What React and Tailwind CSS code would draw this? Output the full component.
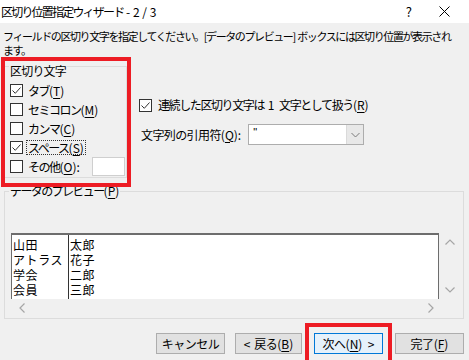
import React from 'react';

const Check = ({ checked }) => (
  <span className="w-[13px] h-[13px] border border-[#333333] bg-white flex items-center justify-center shrink-0">
    {checked && (
      <svg width="11" height="11" viewBox="0 0 11 11">
        <path d="M1.5 5.5 L4.3 8.3 L9.5 2.5" stroke="#333333" fill="none" strokeWidth="1" />
      </svg>
    )}
  </span>
);

// access key like (T)
const Key = ({ k, tail = '' }) => (
  <span className="tracking-[0px]">
    (<span className="underline underline-offset-2">{k}</span>){tail}
  </span>
);

const Option = ({ checked, children }) => (
  <div className="h-[19px] flex items-center gap-[5px]">
    <Check checked={checked} />
    <span className="whitespace-nowrap">{children}</span>
  </div>
);

const Button = ({ children, primary, className = '' }) => (
  <button
    className={`h-[21px] flex items-center justify-center text-[12px] tracking-[-0.5px] border ${
      primary ? 'border-[#0078d7] bg-[#e5f1fb]' : 'border-[#adadad] bg-[#e1e1e1]'
    } ${className}`}
  >
    <span className="whitespace-pre">{children}</span>
  </button>
);

const App = () => {
  return (
    <div className="w-[469px] h-[360px] bg-[#f0f0f0] overflow-hidden flex flex-col text-black font-['Noto_Sans_CJK_JP','Noto_Sans',sans-serif]">
      {/* title bar */}
      <div className="h-[23px] bg-white flex items-center shrink-0">
        <span className="pl-[1px] text-[12px] tracking-[-1.8px] leading-none whitespace-pre">
          区切り位置指定ウィザード<span className="tracking-[0px]"> - 2 / 3</span>
        </span>
        <span className="ml-auto mr-[27px] text-[13px] leading-none">?</span>
        <svg className="mr-[19px]" width="11" height="11" viewBox="0 0 11 11">
          <path d="M0.5 0.5 L10.5 10.5 M10.5 0.5 L0.5 10.5" stroke="#000" strokeWidth="1" />
        </svg>
      </div>

      {/* description */}
      <div className="pt-[6px] pl-[3px] text-[11px] leading-[14px] tracking-[-1.4px] whitespace-pre">
        フィールドの区切り文字を指定してください。[データのプレビュー]<span className="tracking-[0px]"> </span>ボックスには区切り位置が表示され
        <br />
        ます。
      </div>

      {/* options */}
      <div className="flex h-[130px] shrink-0">
        <div className="relative z-10 ml-[1px] w-[130px] h-[130px] border-[4px] border-[#ed1c24]">
          <div className="mt-[5px] h-[112px] border-t border-r border-b border-[#dcdcdc] pl-[5px] text-[12px] tracking-[-1.5px]">
            <div className="-mt-[3px] ml-[-1px] px-[1px] w-fit h-[14px] leading-[14px] bg-[#f0f0f0] tracking-[-0.8px]">区切り文字</div>
            <div className="mt-[3px] flex flex-col">
              <Option checked>
                タブ<Key k="T" />
              </Option>
              <Option>
                セミコロン<Key k="M" />
              </Option>
              <Option>
                カンマ<Key k="C" />
              </Option>
              <div className="h-[19px] flex items-center gap-[3px]">
                <Check checked />
                <span className="whitespace-nowrap px-[1px] border border-dotted border-[#333333] leading-[13px]">
                  スペース<Key k="S" />
                </span>
              </div>
              <div className="h-[19px] flex items-center gap-[5px]">
                <Check />
                <span className="whitespace-nowrap shrink-0">
                  その他<Key k="O" tail=":" />
                </span>
                <span className="ml-[7px] w-[33px] h-[19px] shrink-0 bg-white border border-[#cfcfcf]" />
              </div>
            </div>
          </div>
        </div>

        <div className="ml-[8px] pt-[41px] text-[12px]">
          <div className="h-[14px] flex items-center gap-[6px]">
            <Check checked />
            <span className="whitespace-pre tracking-[-1.4px]">
              連続した区切り文字は<span className="tracking-[1px]"> 1 </span>文字として扱う<Key k="R" />
            </span>
          </div>
          <div className="mt-[12px] ml-[2px] flex items-center gap-[7px]">
            <span className="whitespace-nowrap tracking-[-0.6px]">
              文字列の引用符<Key k="Q" tail=":" />
            </span>
            <div className="w-[116px] h-[21px] bg-white border border-[#adadad] flex">
              <span className="flex-1 pl-[4px] pt-[1px] text-[11px] leading-[12px] text-black font-['Liberation_Sans',sans-serif]">"</span>
              <span className="w-[17px] h-full bg-[#e8e8e8] border-l border-[#dadada] flex items-center justify-center">
                <svg width="9" height="6" viewBox="0 0 9 6">
                  <path d="M0.5 1 L4.5 5 L8.5 1" stroke="#7a7a7a" fill="none" strokeWidth="1" />
                </svg>
              </span>
            </div>
          </div>
        </div>
      </div>

      {/* preview */}
      <fieldset className="-mt-[3px] mx-[4px] w-[460px] h-[135px] border border-[#dcdcdc] shrink-0">
        <legend className="ml-[4px] px-[1px] text-[12px] leading-[14px] tracking-[-1.6px]">
          データのプレビュー<Key k="P" />
        </legend>
        <div className="pt-[35px] pl-[6px] flex">
          <div className="w-[428px] h-[66px] bg-white border-t-2 border-l border-r border-[#6d6d6d] flex text-[12px] leading-[15px] tracking-[0.6px]">
            <div className="w-[57px] pl-[1px] pt-[2px] border-r border-[#333333]">
              <div>山田</div>
              <div>アトラス</div>
              <div>学会</div>
              <div>会員</div>
            </div>
            <div className="pl-[1px] pt-[2px]">
              <div>太郎</div>
              <div>花子</div>
              <div>二郎</div>
              <div>三郎</div>
            </div>
          </div>
          <div className="w-[20px] flex flex-col items-center justify-between py-[6px] pl-[2px]">
            <svg width="10" height="6" viewBox="0 0 10 6">
              <path d="M0.5 5.5 L5 1 L9.5 5.5" stroke="#a6a6a6" fill="none" strokeWidth="1.2" />
            </svg>
            <svg width="10" height="6" viewBox="0 0 10 6">
              <path d="M0.5 0.5 L5 5 L9.5 0.5" stroke="#a6a6a6" fill="none" strokeWidth="1.2" />
            </svg>
          </div>
        </div>
        <div className="h-[18px] flex items-center justify-between pl-[14px] pr-[29px]">
          <svg width="6" height="10" viewBox="0 0 6 10">
            <path d="M5.5 0.5 L1 5 L5.5 9.5" stroke="#a6a6a6" fill="none" strokeWidth="1.2" />
          </svg>
          <svg width="6" height="10" viewBox="0 0 6 10">
            <path d="M0.5 0.5 L5 5 L0.5 9.5" stroke="#a6a6a6" fill="none" strokeWidth="1.2" />
          </svg>
        </div>
      </fieldset>

      {/* buttons */}
      <div className="mt-[4px] flex items-start justify-end pr-[5px]">
        <Button className="w-[69px] mt-[10px] mr-[10px]">キャンセル</Button>
        <Button className="w-[67px] mt-[10px] mr-[3px]">
          {'<  戻る'}<Key k="B" />
        </Button>
        <div className="w-[87px] h-[45px] border-[4px] border-[#ed1c24] px-[5px] pt-[6px] shrink-0">
          <Button primary className="w-[69px]">
            次へ<Key k="N" tail="  >" />
          </Button>
        </div>
        <Button className="w-[69px] mt-[10px] ml-[3px]">
          完了<Key k="F" />
        </Button>
      </div>
    </div>
  );
};

export default App;
